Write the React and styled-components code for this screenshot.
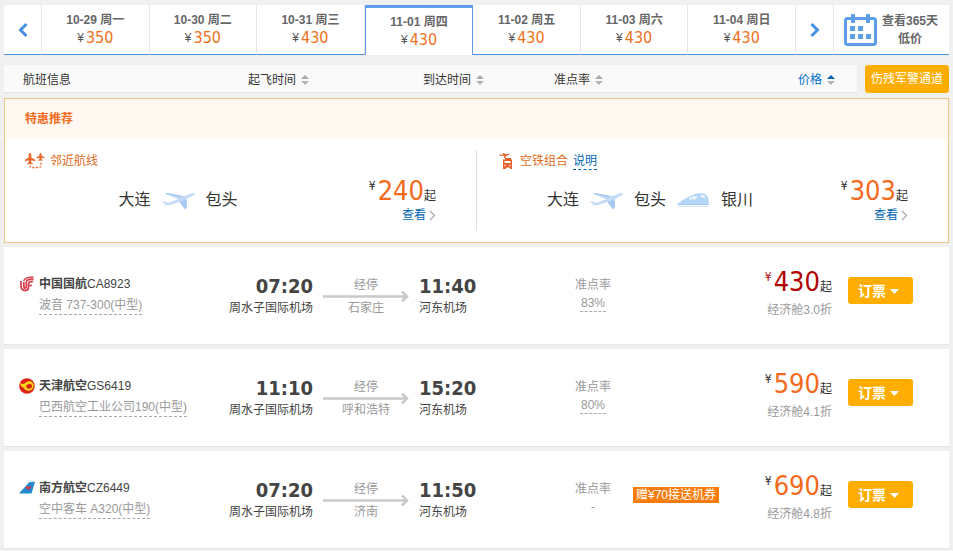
import React from "react";
import styled, { createGlobalStyle } from "styled-components";

const GlobalStyle = createGlobalStyle`
  * {
    box-sizing: border-box;
  }

  body {
    margin: 0;
    background: #f0f0f0;
    color: #333;
    font: 12px/18px "Liberation Sans", "Noto Sans CJK SC", sans-serif;
  }

  button {
    font: inherit;
    color: inherit;
    border: none;
    padding: 0;
    background: none;
    cursor: pointer;
  }

  a {
    color: #0066b3;
    text-decoration: none;
  }
`;

const numberFont = `"DejaVu Sans Condensed", "DejaVu Sans", sans-serif`;

const days = [
  { date: "10-29 周一", price: 350 },
  { date: "10-30 周二", price: 350 },
  { date: "10-31 周三", price: 430 },
  { date: "11-01 周四", price: 430, active: true },
  { date: "11-02 周五", price: 430 },
  { date: "11-03 周六", price: 430 },
  { date: "11-04 周日", price: 430 },
];

const Page = styled.main`
  padding: 5px 4px 0;
`;

/* ---------- date tabs ---------- */

const DateBar = styled.nav`
  display: flex;
  height: 50px;
`;

const ArrowButton = styled.button`
  width: 38px;
  background: #fff;
  border-right: 1px solid #e6e6e6;
  border-bottom: 1px solid #4a8fe2;
  display: flex;
  align-items: center;
  justify-content: center;
`;

const DayTab = styled.button`
  flex: 1;
  display: flex;
  flex-direction: column;
  align-items: center;
  padding-top: ${(p) => (p.$active ? "5px" : "6px")};
  background: #fff;
  border-right: 1px solid #e6e6e6;
  border-bottom: 1px solid #4a8fe2;
  ${(p) =>
    p.$active &&
    `
    border: 1px solid #5f9bea;
    border-top-width: 3px;
    border-bottom: none;
  `}
`;

const DayName = styled.strong`
  color: #666;
  line-height: 18px;
`;

const DayPrice = styled.span`
  display: flex;
  align-items: center;
  line-height: 18px;
  color: #555;

  b {
    font: 16px/18px ${numberFont};
    color: #f07020;
    margin-left: 2px;
  }
`;

const CalendarLink = styled.a`
  width: 115px;
  padding: 0 11px 0 10px;
  background: #fff;
  border-bottom: 1px solid #4a8fe2;
  color: #666;
  font-weight: bold;
  text-align: center;
  display: flex;
  align-items: center;
  justify-content: space-between;
`;

/* ---------- sort header ---------- */

const SortBar = styled.div`
  display: flex;
  gap: 8px;
  margin-top: 10px;
  height: 28px;
`;

const SortColumns = styled.div`
  flex: 1;
  display: grid;
  grid-template-columns: 244fr 175fr 131fr 244fr 59fr;
  align-items: center;
  padding-top: 2px;
  background: #fafafa;
  border-bottom: 1px solid #e3e3e3;
`;

const ColumnTitle = styled.span`
  padding-left: 19px;
`;

const SortButton = styled.button`
  display: flex;
  align-items: center;
  gap: 5px;
  color: ${(p) => (p.$active ? "#0070c9" : "#333")};
`;

const MilitaryLink = styled.a`
  width: 84px;
  background: #ffad00;
  border-radius: 3px;
  color: #fff;
  line-height: 28px;
  text-align: center;
`;

/* ---------- special offers ---------- */

const Promo = styled.section`
  margin-top: 5px;
  border: 1px solid #eec487;
  background: #fff;
`;

const PromoTitle = styled.h2`
  margin: 0;
  padding: 1px 0 0 20px;
  background: #fef8f0;
  color: #f26a1b;
  font-size: 12px;
  line-height: 38px;
`;

const PromoBody = styled.div`
  display: flex;
  padding: 12px 0;
`;

const Offer = styled.article`
  flex: 1;
  height: 80px;

  & + & {
    border-left: 1px solid #ddd;
  }
`;

const OfferKind = styled.div`
  display: flex;
  align-items: center;
  gap: 5px;
  padding-left: ${(p) => (p.$wide ? "22px" : "20px")};
  color: #e06a1a;
  line-height: 22px;
`;

const HelpLink = styled.a`
  line-height: 16px;
  border-bottom: 1px dashed #0066b3;
`;

const OfferMain = styled.div`
  display: flex;
  align-items: center;
  height: 56px;
`;

const Route = styled.div`
  flex: 1;
  display: flex;
  align-items: center;
  justify-content: center;
  gap: 11px;
  font-size: 16px;
  line-height: 24px;
`;

const OfferPrice = styled.div`
  width: 125px;
  padding-right: 40px;
  display: flex;
  flex-direction: column;
  align-items: flex-end;
`;

const ViewLink = styled.a`
  display: flex;
  align-items: center;
  gap: 3px;
`;

/* ---------- price shared by offers and flights ---------- */

const PriceLine = styled.div`
  display: flex;
  align-items: baseline;
  white-space: nowrap;
  height: 30px;

  sup {
    align-self: flex-start;
    font: 12px/20px ${numberFont};
    color: ${(p) => (p.$lowest ? "#b01010" : "#333")};
    margin: 0 2px 0 0;
  }

  b {
    font: 27px/30px ${numberFont};
    color: ${(p) => (p.$lowest ? "#b00000" : "#f56a1d")};
  }
`;

/* ---------- flights ---------- */

const FlightList = styled.ul`
  list-style: none;
  margin: 4px 0 0;
  padding: 0;
  display: flex;
  flex-direction: column;
  gap: 4px;
`;

const FlightRow = styled.li`
  display: grid;
  grid-template-columns: 209fr 100fr 106fr 134fr 80fr 96fr 103fr 117fr;
  align-items: start;
  padding: 20px 0 25px;
  background: #fff;
  border-bottom: 1px solid #e6e6e6;
  white-space: nowrap;
`;

const AirlineCell = styled.div`
  display: grid;
  grid-template-columns: 16px auto;
  justify-content: start;
  justify-items: start;
  align-items: center;
  column-gap: 4px;
  padding: 7px 0 0 15px;
  line-height: 20px;
  color: #444;
`;

const Aircraft = styled.span`
  grid-column: 2;
  margin-top: 2px;
  line-height: 18px;
  color: #999;
  border-bottom: 1px dashed #aaa;
`;

const TimeCell = styled.div`
  padding-top: 6px;
  text-align: ${(p) => p.$align || "left"};
  color: #444;
`;

const Time = styled.time`
  display: block;
  font: bold 20px/26px ${numberFont};
`;

const StopCell = styled.div`
  padding: 12px 10px 0;
  text-align: center;
  line-height: 12px;
  color: #999;

  svg {
    display: block;
    width: 100%;
  }
`;

const PunctualCell = styled.div`
  padding-top: 9px;
  text-align: center;
  color: #999;
`;

const Rate = styled.span`
  display: inline-block;
  min-width: 26px;
  line-height: 16px;
  border-bottom: ${(p) => (p.$known ? "1px dashed #aaa" : "none")};
`;

const GiftCell = styled.div`
  padding-top: 15px;
`;

const Gift = styled.span`
  display: inline-block;
  padding: 0 3px;
  background: #f87c0c;
  color: #fff;
  line-height: 16px;
`;

const PriceCell = styled.div`
  display: flex;
  flex-direction: column;
  align-items: flex-end;
  gap: 4px;
`;

const Discount = styled.span`
  color: #999;
`;

const BookCell = styled.div`
  padding: 10px 0 0 16px;
`;

const BookButton = styled.button`
  width: 65px;
  height: 27px;
  display: flex;
  align-items: center;
  padding: 0 10px;
  gap: 4px;
  background: #ffad00;
  border-radius: 3px;
  color: #fff;
  font-size: 14px;
  font-weight: bold;
`;

/* ---------- icons ---------- */

const Chevron = ({ right }) => (
  <svg width="10" height="16" viewBox="0 0 10 16" aria-hidden="true">
    <path
      d={right ? "M1.5 2l6 6-6 6" : "M8.5 2l-6 6 6 6"}
      fill="none"
      stroke="#4590e0"
      strokeWidth="3"
    />
  </svg>
);

const CalendarIcon = () => (
  <svg width="33" height="32" viewBox="0 0 33 32" fill="#5c9ee8" aria-hidden="true">
    <rect x="1.5" y="4.500" width="30" height="26" rx="2" fill="none" stroke="#5c9ee8" strokeWidth="3" />
    <rect x="7" y="0" width="4" height="9" rx="1" />
    <rect x="22" y="0" width="4" height="9" rx="1" />
    <path d="M6 12h5v5H6zM14 12h5v5h-5zM6 20h5v5H6zM14 20h5v5h-5zM22 20h5v5h-5z" />
  </svg>
);

const SortIcon = ({ active }) => (
  <svg width="8" height="10" viewBox="0 0 8 10" aria-hidden="true">
    <path d="M4 0l4 4H0z" fill={active ? "#0060b0" : "#aaa"} />
    <path d="M4 10l4-4H0z" fill="#b5b5b5" />
  </svg>
);

const NearbyIcon = () => (
  <svg width="20" height="16" viewBox="0 0 20 16" fill="#e8692a" aria-hidden="true">
    <path d="M5 0c1 0 1.300 1 1.300 2v2.500l3.900 2.300v1.500L6.300 7.300v2.200l1.500 1v1L5 11l-2.800.5v-1l1.500-1V7.300L0 8.300V6.800l3.700-2.300V2C3.700 1 4 0 5 0z" />
    <path d="M15.500 0c.8 0 1.100.7 1.100 1.500v1.200l2.900 1.700v1.200l-2.900-.8V6.200l1.100.8v.8l-2.200-.3-2.200.3V7l1.100-.8V4.800l-2.900.8V4.400l2.900-1.700V1.500c0-.8.300-1.500 1.100-1.500z" />
    <path d="M5 12.500c0 1.500.8 2 2 2h7c1.300 0 2-.8 2-2V9" fill="none" stroke="#e8692a" strokeWidth="1.300" strokeDasharray="2 1.500" />
  </svg>
);

const AirRailIcon = () => (
  <svg width="16" height="16" viewBox="0 0 16 16" fill="#e8602a" aria-hidden="true">
    <path d="M0 1.200l1-.3 1.300 1 2.200-.4L3 .2 4.300 0l3.200 1.200 2.600-.4c.8 0 .8.700.2.900L7.700 2.800 6 5H4.800l.7-2.200-3.700.3z" />
    <path fillRule="evenodd" d="M6 5h6v1.500h1V16h-1.500l-1-1.500h-3L6.500 16H4V6.500h2zM5.500 8v2h6V8zM5.500 11.500v2l1.800-1zM11.500 11.500v2l-1.800-1z" />
  </svg>
);

const PlaneIcon = () => (
  <svg width="33" height="17" viewBox="0 0 33 17" aria-hidden="true">
    <path d="M0 10l2-.5 4.500 1.300L16 7.200 3 1.800 5.500 1 22 4.200l6.500-2.400c2-.7 4.500-.6 4.500.3 0 .8-2 1.800-4 2.600L24.500 7.200l.5 8.800-2.200 1-5.300-7-7.500 2.300c-2.500.8-4.500 1.100-6 .7L1.500 14l2-1.700z" fill="#c3dbf6" />
    <path d="M3 1.800L5.500 1 22 4.200l-3 1.300zM17.500 10l7-2.800.5 8.800-2.200 1z" fill="#a8c9f0" />
  </svg>
);

const TrainIcon = () => (
  <svg width="33" height="15" viewBox="0 0 33 15" aria-hidden="true">
    <path d="M0 11.500C4 7.500 12 3.500 18 1c4-1.200 10-1 12 1.500 1.700 2.200 2 6.500 1.500 9z" fill="#b3d6f8" />
    <path d="M12 5.200l5-2.200 4 .5-3.500 3.700-1.500-1.500-3 1.300zM23 2l4 .3 2 2.700-4-.3z" fill="#edf6ff" />
    <path d="M0 11h31.500v1H0z" fill="#9fcaf5" />
    <path d="M1 13.500h30" stroke="#cfe5fb" />
  </svg>
);

const ViewArrow = () => (
  <svg width="7" height="11" viewBox="0 0 7 11" aria-hidden="true">
    <path d="M1 1l4.500 4.500L1 10" fill="none" stroke="#aaa" strokeWidth="1.300" />
  </svg>
);

const RouteArrow = () => (
  <svg height="11" viewBox="0 0 86 11" aria-hidden="true">
    <path d="M0 5.500h84M79 0.500l5 5-5 5" fill="none" stroke="#c9c9c9" strokeWidth="2.500" />
  </svg>
);

const CaretDown = () => (
  <svg width="9" height="7" viewBox="0 0 9 7" aria-hidden="true">
    <path d="M0 2h9L4.500 7z" fill="#fff" />
  </svg>
);

const AirChinaLogo = () => (
  <svg width="16" height="16" viewBox="0 0 16 16" fill="none" stroke="#da4050" strokeWidth="1.800" aria-hidden="true">
    <path d="M2 5v4.500C2 13 4 14.500 6.500 14.500S9.500 13 9.500 11V8.500C9.500 6 11 5.300 14 5.300" />
    <path d="M4.800 6v3.800c0 1.500.5 2.200 1.200 2.200s1.300-.6 1.300-2V6.500C7.300 4 10 3.200 14.500 3.200" />
    <path d="M4.500 4.800C6 2.500 9 1 14.500 1M9.500 9.500h3.500" strokeWidth="1.500" />
  </svg>
);

const TianjinLogo = () => (
  <svg width="16" height="16" viewBox="0 0 16 16" aria-hidden="true">
    <circle cx="8" cy="8" r="7.800" fill="#dc2418" />
    <path d="M1 5c2.500 1.500 4 1 5.500-.3C8.500 3 11.500 2.500 13.500 4.500c2 2.300 1.300 5.800-1 7.300-2.800 1.800-6.500.8-7.800-2C3 9.500 1.500 7.500 1 5z" fill="#ffd61a" />
    <path d="M7 8.200c.5-2 1.500-1.300 2.700-2.200 1.500-.8 3.300.2 3.300 2s-1.500 3-3.300 2.800C8.200 10.600 7.500 9.500 7 8.200z" fill="#dc2418" />
  </svg>
);

const SouthernLogo = () => (
  <svg width="16" height="16" viewBox="0 0 16 16" aria-hidden="true">
    <path d="M0 13.500L9.500 3C10.500 2 12 1.800 16 1.800L12.500 13.500z" fill="#2389cc" />
    <path d="M9.300 11l-.5-2C7 9 6.300 7.500 7 6c.8.600 1.300.7 2.200.7.900 0 1.600-.5 2.800-.5.200 1.700-.4 2.700-2 2.900z" fill="#e03048" />
  </svg>
);

const flights = [
  {
    Logo: AirChinaLogo,
    airline: "中国国航",
    code: "CA8923",
    aircraft: "波音 737-300(中型)",
    depart: "07:20",
    arrive: "11:40",
    stop: "石家庄",
    rate: "83%",
    price: 430,
    discount: "经济舱3.0折",
    lowest: true,
  },
  {
    Logo: TianjinLogo,
    airline: "天津航空",
    code: "GS6419",
    aircraft: "巴西航空工业公司190(中型)",
    depart: "11:10",
    arrive: "15:20",
    stop: "呼和浩特",
    rate: "80%",
    price: 590,
    discount: "经济舱4.1折",
  },
  {
    Logo: SouthernLogo,
    airline: "南方航空",
    code: "CZ6449",
    aircraft: "空中客车 A320(中型)",
    depart: "07:20",
    arrive: "11:50",
    stop: "济南",
    gift: "赠¥70接送机券",
    price: 690,
    discount: "经济舱4.8折",
  },
];

const Price = ({ value, lowest }) => (
  <PriceLine $lowest={lowest}>
    <sup>¥</sup>
    <b>{value}</b>起
  </PriceLine>
);

const Flight = ({ flight }) => {
  const { Logo } = flight;
  return (
    <FlightRow>
      <AirlineCell>
        <Logo />
        <span>
          <strong>{flight.airline}</strong>
          {flight.code}
        </span>
        <Aircraft>{flight.aircraft}</Aircraft>
      </AirlineCell>
      <TimeCell $align="right">
        <Time>{flight.depart}</Time>
        周水子国际机场
      </TimeCell>
      <StopCell>
        经停
        <RouteArrow />
        {flight.stop}
      </StopCell>
      <TimeCell>
        <Time>{flight.arrive}</Time>
        河东机场
      </TimeCell>
      <PunctualCell>
        <div>准点率</div>
        <Rate $known={Boolean(flight.rate)}>{flight.rate || "-"}</Rate>
      </PunctualCell>
      <GiftCell>{flight.gift && <Gift>{flight.gift}</Gift>}</GiftCell>
      <PriceCell>
        <Price value={flight.price} lowest={flight.lowest} />
        <Discount>{flight.discount}</Discount>
      </PriceCell>
      <BookCell>
        <BookButton type="button">
          订票
          <CaretDown />
        </BookButton>
      </BookCell>
    </FlightRow>
  );
};

const App = () => {
  return (
    <>
      <GlobalStyle />
      <Page>
        <DateBar>
          <ArrowButton type="button" aria-label="前一天">
            <Chevron />
          </ArrowButton>
          {days.map((day) => (
            <DayTab key={day.date} type="button" $active={day.active}>
              <DayName>{day.date}</DayName>
              <DayPrice>
                ¥<b>{day.price}</b>
              </DayPrice>
            </DayTab>
          ))}
          <ArrowButton type="button" aria-label="后一天">
            <Chevron right />
          </ArrowButton>
          <CalendarLink href="#calendar">
            <CalendarIcon />
            <span>
              查看365天
              <br />
              低价
            </span>
          </CalendarLink>
        </DateBar>

        <SortBar>
          <SortColumns>
            <ColumnTitle>航班信息</ColumnTitle>
            <SortButton type="button">
              起飞时间
              <SortIcon />
            </SortButton>
            <SortButton type="button">
              到达时间
              <SortIcon />
            </SortButton>
            <SortButton type="button">
              准点率
              <SortIcon />
            </SortButton>
            <SortButton type="button" $active>
              价格
              <SortIcon active />
            </SortButton>
          </SortColumns>
          <MilitaryLink href="#military">伤残军警通道</MilitaryLink>
        </SortBar>

        <Promo>
          <PromoTitle>特惠推荐</PromoTitle>
          <PromoBody>
            <Offer>
              <OfferKind>
                <NearbyIcon />
                邻近航线
              </OfferKind>
              <OfferMain>
                <Route>
                  大连
                  <PlaneIcon />
                  包头
                </Route>
                <OfferPrice>
                  <Price value={240} />
                  <ViewLink href="#nearby">
                    查看
                    <ViewArrow />
                  </ViewLink>
                </OfferPrice>
              </OfferMain>
            </Offer>
            <Offer>
              <OfferKind $wide>
                <AirRailIcon />
                空铁组合
                <HelpLink href="#help">说明</HelpLink>
              </OfferKind>
              <OfferMain>
                <Route>
                  大连
                  <PlaneIcon />
                  包头
                  <TrainIcon />
                  银川
                </Route>
                <OfferPrice>
                  <Price value={303} />
                  <ViewLink href="#air-rail">
                    查看
                    <ViewArrow />
                  </ViewLink>
                </OfferPrice>
              </OfferMain>
            </Offer>
          </PromoBody>
        </Promo>

        <FlightList>
          {flights.map((flight) => (
            <Flight key={flight.code} flight={flight} />
          ))}
        </FlightList>
      </Page>
    </>
  );
};

export default App;
